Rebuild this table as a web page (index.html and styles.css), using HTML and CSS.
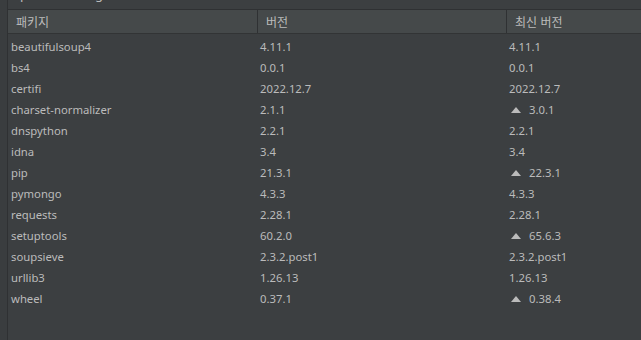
FILE: index.html
```html
<!DOCTYPE html>
<html lang="ko">
<head>
<meta charset="utf-8">
<link rel="stylesheet" href="styles.css">
</head>
<body>
<div class="frame">
  <div class="gutter"></div>
  <div class="panel">
    <div class="title"><span class="t1">p</span><span class="t2">g</span></div>
    <div class="table">
      <div class="row head">
        <div class="c c1">패키지</div>
        <div class="c c2">버전</div>
        <div class="c c3">최신 버전</div>
      </div>
      <div class="body">
      <div class="row"><div class="c c1">beautifulsoup4</div><div class="c c2">4.11.1</div><div class="c c3">4.11.1</div></div>
      <div class="row"><div class="c c1">bs4</div><div class="c c2">0.0.1</div><div class="c c3">0.0.1</div></div>
      <div class="row"><div class="c c1">certifi</div><div class="c c2">2022.12.7</div><div class="c c3">2022.12.7</div></div>
      <div class="row"><div class="c c1">charset-normalizer</div><div class="c c2">2.1.1</div><div class="c c3"><span class="up"></span>3.0.1</div></div>
      <div class="row"><div class="c c1">dnspython</div><div class="c c2">2.2.1</div><div class="c c3">2.2.1</div></div>
      <div class="row"><div class="c c1">idna</div><div class="c c2">3.4</div><div class="c c3">3.4</div></div>
      <div class="row"><div class="c c1">pip</div><div class="c c2">21.3.1</div><div class="c c3"><span class="up"></span>22.3.1</div></div>
      <div class="row"><div class="c c1">pymongo</div><div class="c c2">4.3.3</div><div class="c c3">4.3.3</div></div>
      <div class="row"><div class="c c1">requests</div><div class="c c2">2.28.1</div><div class="c c3">2.28.1</div></div>
      <div class="row"><div class="c c1">setuptools</div><div class="c c2">60.2.0</div><div class="c c3"><span class="up"></span>65.6.3</div></div>
      <div class="row"><div class="c c1">soupsieve</div><div class="c c2">2.3.2.post1</div><div class="c c3">2.3.2.post1</div></div>
      <div class="row"><div class="c c1">urllib3</div><div class="c c2">1.26.13</div><div class="c c3">1.26.13</div></div>
      <div class="row"><div class="c c1">wheel</div><div class="c c2">0.37.1</div><div class="c c3"><span class="up"></span>0.38.4</div></div>
      </div>
    </div>
  </div>
</div>
</body>
</html>
```
FILE: styles.css
```css
html, body {
  margin: 0;
  padding: 0;
  background: #3c3f41;
}
.frame {
  display: flex;
  width: 641px;
  height: 340px;
  overflow: hidden;
  font-family: "Noto Sans", "Noto Sans CJK KR", sans-serif;
  font-size: 11.3px;
  color: #bbbbbb;
}
.gutter {
  width: 7px;
  flex: none;
  background: #3a3d3f;
  border-right: 1px solid #2f3133;
}
.panel {
  flex: 1;
  display: flex;
  flex-direction: column;
}
.title {
  height: 9px;
  overflow: hidden;
  border-bottom: 1px solid #2f3133;
  position: relative;
  font-size: 13px;
}
.title span {
  display: block;
  position: absolute;
  top: -15px;
  line-height: 18px;
}
.t1 { left: 12px; }
.t2 { left: 87px; }
.body {
  padding-top: 2px;
}
.row {
  display: flex;
  height: 21px;
  align-items: center;
}
.row.head {
  height: 23px;
  background: #45494a;
  border-bottom: 1px solid #323435;
}
.c {
  white-space: nowrap;
  padding-left: 3px;
  display: flex;
  align-items: center;
}
.c1 { width: 246px; }
.c2 { width: 246px; }
.c3 { flex: 1; }
.head .c {
  height: 23px;
  padding-left: 8px;
  font-family: "Noto Sans CJK KR", sans-serif;
  font-size: 12px;
}
.head .c2, .head .c3 {
  border-left: 1px solid #2f3133;
}
.head .c1 { width: 241px; }
.head .c2 { width: 240px; }
.up {
  display: inline-block;
  width: 0;
  height: 0;
  border-left: 5px solid transparent;
  border-right: 5px solid transparent;
  border-bottom: 6px solid #bbbbbb;
  margin: 0 8px 0 2px;
}
```
